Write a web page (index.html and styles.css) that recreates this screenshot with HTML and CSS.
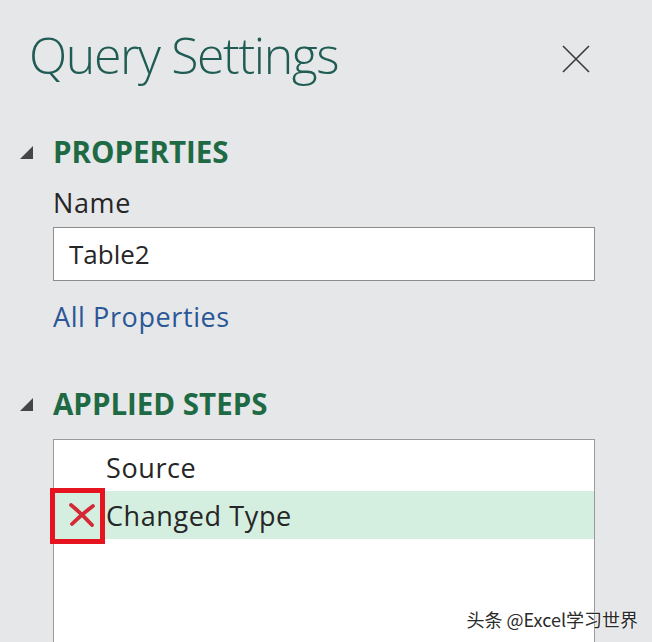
FILE: index.html
```html
<!DOCTYPE html>
<html lang="en">
<head>
    <meta charset="utf-8" />
    <title>Query Settings</title>
    <link rel="stylesheet" href="styles.css">
</head>
<body>
    <div class="panel">
        <!--标题-->
        <div class="header">
            <h1 class="title">Query Settings</h1>
            <span class="close">
                <svg width="28" height="28" viewBox="0 0 28 28"><path d="M1 1 L27 27 M27 1 L1 27" stroke="#3a3a3a" stroke-width="1.6" fill="none"/></svg>
            </span>
        </div>

        <!--属性-->
        <div class="section-head">
            <svg class="caret" width="13" height="13" viewBox="0 0 13 13"><polygon points="13,0 13,13 0,13" fill="#454545"/></svg>
            <h2>PROPERTIES</h2>
        </div>
        <div class="section-body">
            <div class="label">Name</div>
            <div class="name-box">Table2</div>
            <a class="link" href="#">All Properties</a>
        </div>

        <!--应用的步骤-->
        <div class="section-head steps-head">
            <svg class="caret" width="13" height="13" viewBox="0 0 13 13"><polygon points="13,0 13,13 0,13" fill="#454545"/></svg>
            <h2>APPLIED STEPS</h2>
        </div>
        <div class="section-body steps-body">
            <ul class="steps">
                <li><span class="icon"></span>Source</li>
                <li class="current">
                    <span class="icon">
                        <svg width="28" height="24" viewBox="0 0 28 24"><path d="M3 2 Q13 10 24 22 M25 3 Q14 11 4 21" stroke="#d42a35" stroke-width="3.8" stroke-linecap="round" fill="none"/></svg>
                    </span>
                    Changed Type
                    <span class="mark"></span>
                </li>
            </ul>
        </div>
    </div>
    <div class="watermark">头条 @Excel学习世界</div>
</body>
</html>
```

FILE: styles.css
```css
* {
    margin: 0;
    padding: 0
}

ul {
    list-style: none
}

html, body {
    height: 100%;
    overflow: hidden;
}

body {
    background-color: #e6e7e9;
    font-family: "Open Sans", "Noto Sans", sans-serif;
    color: #262626;
    position: relative;
}

.panel {
    display: flex;
    flex-direction: column;
    height: 100%;
}

.header {
    display: flex;
    align-items: center;
    justify-content: space-between;
    padding: 25px 62px 0 29px;
    height: 60px;
}

    .header .title {
        font-size: 50px;
        font-weight: 300;
        line-height: 60px;
        letter-spacing: -1.4px;
        color: #1f5c53;
    }

    .header .close {
        display: flex;
        margin-top: 7px;
    }

.section-head {
    display: flex;
    align-items: center;
    gap: 20px;
    padding-left: 20px;
    margin-top: 50px;
}

    .section-head h2 {
        font-size: 29.5px;
        font-weight: 700;
        line-height: 34px;
        color: #1e6a44;
    }

.steps-head {
    margin-top: 54px;
}

.section-body {
    padding: 0 57px 0 53px;
}

.label {
    font-size: 27px;
    letter-spacing: 0.6px;
    line-height: 32px;
    margin-top: 18px;
}

.name-box {
    margin-top: 8px;
    height: 52px;
    line-height: 52px;
    border: 1px solid #8c8c8c;
    background-color: #fff;
    padding-left: 15px;
    font-size: 26px;
}

.link {
    display: block;
    margin-top: 20px;
    font-size: 27px;
    letter-spacing: 0.6px;
    line-height: 32px;
    color: #2b5797;
    text-decoration: none;
}

.steps-body {
    flex: 1;
    display: flex;
    flex-direction: column;
    min-height: 0;
}

.steps {
    flex: 1;
    margin-top: 18px;
    border: 1px solid #9a9a9a;
    border-bottom: 0;
    background-color: #fff;
    padding-top: 3px;
}

    .steps li {
        display: flex;
        align-items: center;
        height: 48px;
        font-size: 27px;
        letter-spacing: 0.6px;
        position: relative;
    }

        .steps li.current {
            background-color: #d4efe0;
        }

    .steps .icon {
        display: flex;
        justify-content: center;
        width: 52px;
        padding-left: 4px;
        box-sizing: border-box;
    }

    /*红色标注框*/
    .steps .mark {
        position: absolute;
        left: -4px;
        top: -3px;
        width: 55px;
        height: 56px;
        box-sizing: border-box;
        border: 5px solid #e5141e;
    }

.watermark {
    position: absolute;
    right: 14px;
    bottom: 10px;
    font-family: "Noto Sans CJK SC", sans-serif;
    font-size: 18px;
    color: #2a2a2a;
    text-shadow: 0 0 2px #fff, 0 0 2px #fff;
}
```
